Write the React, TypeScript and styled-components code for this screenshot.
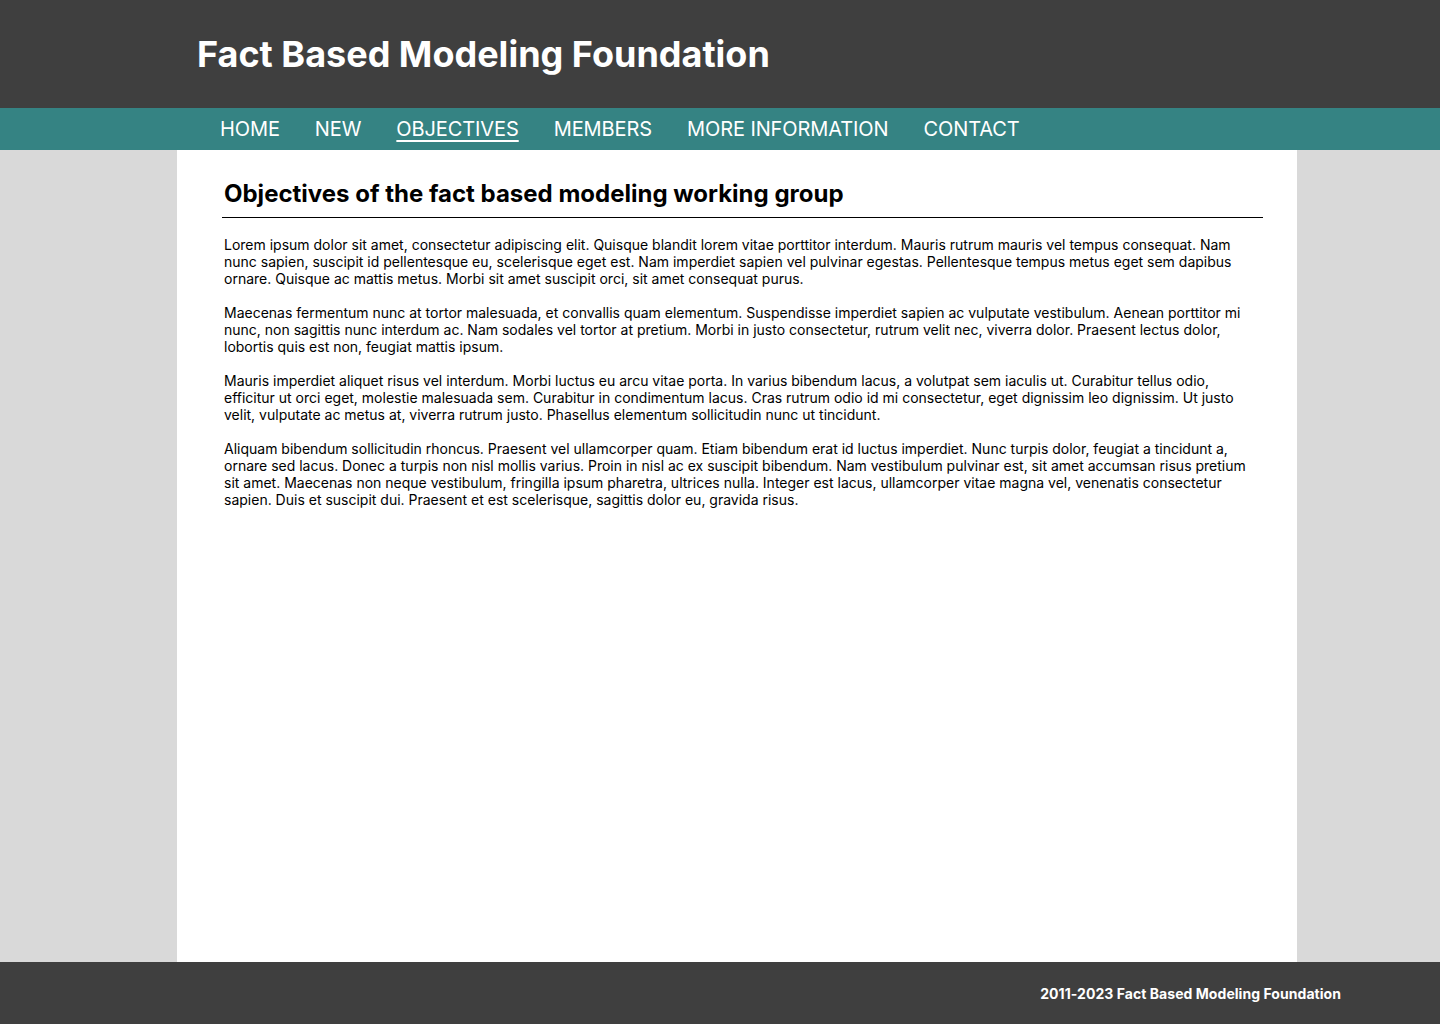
import * as React from 'react'
import styled, { createGlobalStyle } from 'styled-components'

const GlobalStyle = createGlobalStyle`
  html, body {
    margin: 0;
    padding: 0;
    background: #d9d9d9;
    font-family: Inter, "Noto Sans", sans-serif;
  }
`

const Page = styled.div`
  min-height: 1024px;
  display: flex;
  flex-direction: column;
`

const Header = styled.header`
  height: 108px;
  background: #3f3f3f;
  display: flex;
  align-items: center;
  padding-left: 197px;
  box-sizing: border-box;
`

const SiteTitle = styled.h1`
  margin: 0;
  color: #fff;
  font-size: 36px;
  font-weight: 700;
`

const Nav = styled.nav`
  height: 42px;
  background: #358383;
  display: flex;
  align-items: center;
  gap: 35px;
  padding-left: 220px;
`

const NavItem = styled.a<{ $active?: boolean }>`
  color: #fff;
  font-size: 20px;
  font-weight: 400;
  letter-spacing: -0.1px;
  text-decoration: ${(p) => (p.$active ? 'underline' : 'none')};
  text-underline-offset: 4px;
  text-decoration-thickness: 2px;
  cursor: pointer;
`

const Main = styled.main`
  flex: 1;
  width: 1120px;
  margin-left: 177px;
  background: #fff;
  padding: 29px 34px 40px 45px;
  box-sizing: border-box;
`

const Heading = styled.h2`
  margin: 0;
  font-size: 24px;
  font-weight: 700;
  color: #000;
  padding-bottom: 9px;
  border-bottom: 1px solid #000;
  text-indent: 2px;
`

const Body = styled.div`
  padding: 18px 0 0 2px;
`

const Para = styled.p`
  margin: 0 0 17px;
  font-size: 14px;
  line-height: 17px;
  color: #000;
`

const Footer = styled.footer`
  height: 62px;
  background: #3f3f3f;
  display: flex;
  align-items: center;
  justify-content: flex-end;
  padding-right: 99px;
`

const FooterText = styled.span`
  color: #fff;
  font-size: 14px;
  font-weight: 700;
  letter-spacing: 0.05px;
`

const navItems = ['HOME', 'NEW', 'OBJECTIVES', 'MEMBERS', 'MORE INFORMATION', 'CONTACT']

const paragraphs = [
  'Lorem ipsum dolor sit amet, consectetur adipiscing elit. Quisque blandit lorem vitae porttitor interdum. Mauris rutrum mauris vel tempus consequat. Nam nunc sapien, suscipit id pellentesque eu, scelerisque eget est. Nam imperdiet sapien vel pulvinar egestas. Pellentesque tempus metus eget sem dapibus ornare. Quisque ac mattis metus. Morbi sit amet suscipit orci, sit amet consequat purus.',
  'Maecenas fermentum nunc at tortor malesuada, et convallis quam elementum. Suspendisse imperdiet sapien ac vulputate vestibulum. Aenean porttitor mi nunc, non sagittis nunc interdum ac. Nam sodales vel tortor at pretium. Morbi in justo consectetur, rutrum velit nec, viverra dolor. Praesent lectus dolor, lobortis quis est non, feugiat mattis ipsum.',
  'Mauris imperdiet aliquet risus vel interdum. Morbi luctus eu arcu vitae porta. In varius bibendum lacus, a volutpat sem iaculis ut. Curabitur tellus odio, efficitur ut orci eget, molestie malesuada sem. Curabitur in condimentum lacus. Cras rutrum odio id mi consectetur, eget dignissim leo dignissim. Ut justo velit, vulputate ac metus at, viverra rutrum justo. Phasellus elementum sollicitudin nunc ut tincidunt.',
  'Aliquam bibendum sollicitudin rhoncus. Praesent vel ullamcorper quam. Etiam bibendum erat id luctus imperdiet. Nunc turpis dolor, feugiat a tincidunt a, ornare sed lacus. Donec a turpis non nisl mollis varius. Proin in nisl ac ex suscipit bibendum. Nam vestibulum pulvinar est, sit amet accumsan risus pretium sit amet. Maecenas non neque vestibulum, fringilla ipsum pharetra, ultrices nulla. Integer est lacus, ullamcorper vitae magna vel, venenatis consectetur sapien. Duis et suscipit dui. Praesent et est scelerisque, sagittis dolor eu, gravida risus.',
]

export default function App() {
  return (
    <>
      <GlobalStyle />
      <Page>
        <Header>
          <SiteTitle>Fact Based Modeling Foundation</SiteTitle>
        </Header>
        <Nav>
          {navItems.map((item) => (
            <NavItem key={item} $active={item === 'OBJECTIVES'}>
              {item}
            </NavItem>
          ))}
        </Nav>
        <Main>
          <Heading>Objectives of the fact based modeling working group</Heading>
          <Body>
            {paragraphs.map((p, i) => (
              <Para key={i}>{p}</Para>
            ))}
          </Body>
        </Main>
        <Footer>
          <FooterText>2011-2023 Fact Based Modeling Foundation</FooterText>
        </Footer>
      </Page>
    </>
  )
}
